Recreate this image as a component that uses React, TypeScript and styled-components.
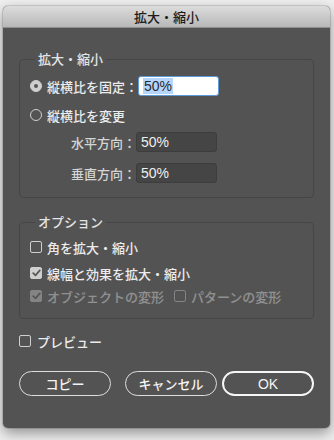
import styled, { createGlobalStyle } from "styled-components";

const GlobalStyle = createGlobalStyle`
  html, body {
    margin: 0;
    padding: 0;
    background: #efefef;
  }
  body {
    font-family: "Noto Sans CJK JP", "Noto Sans", sans-serif;
  }
`;

const Page = styled.div`
  width: 334px;
  height: 440px;
  padding: 6px 4px 0 3px;
  box-sizing: border-box;
  overflow: hidden;
`;

const Window = styled.div`
  width: 327px;
  height: 422px;
  border-radius: 5px;
  overflow: hidden;
  display: flex;
  flex-direction: column;
  background: #535353;
  box-shadow: 0 5px 14px rgba(0, 0, 0, 0.4), 0 0 0 1px rgba(0, 0, 0, 0.12);
`;

const TitleBar = styled.div`
  height: 22px;
  flex-shrink: 0;
  background: linear-gradient(#dcdcdc, #b8b8b8);
  border-bottom: 1px solid #8e8e8e;
  box-sizing: border-box;
  display: flex;
  align-items: center;
  justify-content: center;
  font-size: 13px;
  font-weight: 500;
  color: #1c1c1c;
`;

const Body = styled.div`
  flex: 1;
  padding: 23px 16px 0 16px;
  display: flex;
  flex-direction: column;
  color: #e6e6e6;
  font-size: 13px;
  font-weight: 500;
`;

const Group = styled.fieldset<{ $top?: number }>`
  margin: ${(p) => p.$top ?? 0}px 0 0 0;
  padding: ${(p) => (p.$top ? "8px 10px 13px" : "9px 10px 14px")};
  border: 1px solid #464646;
  border-radius: 4px;
  min-width: 0;
`;

const Legend = styled.legend`
  margin-left: 5px;
  padding: 0 3px;
  font-size: 13px;
  line-height: 16px;
  color: #e4e4e4;
`;

const Row = styled.div<{ $gap?: number }>`
  display: flex;
  align-items: center;
  height: 20px;
  margin-top: ${(p) => p.$gap ?? 0}px;
`;

const OptionLabel = styled.div`
  flex: 0 0 106px;
  display: flex;
  align-items: center;
  gap: 5px;
  white-space: nowrap;
  color: #ececec;
`;

const FieldLabel = styled.div`
  flex: 0 0 106px;
  text-align: right;
  white-space: nowrap;
  color: #d4d4d4;
`;

const Radio = styled.span<{ $on?: boolean }>`
  width: 12px;
  height: 12px;
  box-sizing: border-box;
  border-radius: 50%;
  border: 1px solid #cfcfcf;
  background: ${(p) => (p.$on ? "#cfcfcf" : "transparent")};
  display: flex;
  align-items: center;
  justify-content: center;
  flex-shrink: 0;
  &::after {
    content: "";
    display: ${(p) => (p.$on ? "block" : "none")};
    width: 4px;
    height: 4px;
    border-radius: 50%;
    background: #555;
  }
`;

const TextBox = styled.div<{ $active?: boolean }>`
  width: 81px;
  height: 20px;
  box-sizing: border-box;
  border-radius: 3px;
  display: flex;
  align-items: center;
  padding-left: 4px;
  font-family: "Liberation Sans", Arial, sans-serif;
  font-weight: 400;
  font-size: 14px;
  background: ${(p) => (p.$active ? "#ffffff" : "#454545")};
  border: 1px solid ${(p) => (p.$active ? "#5e9ad6" : "#3d3d3d")};
  color: ${(p) => (p.$active ? "#2a2a2a" : "#efefef")};
`;

const Selected = styled.span`
  background: #b4d5fd;
  padding: 0 1px;
`;

const CheckRow = styled.div<{ $gap?: number; $disabled?: boolean }>`
  display: flex;
  align-items: center;
  height: 18px;
  margin-top: ${(p) => p.$gap ?? 0}px;
  opacity: ${(p) => (p.$disabled ? 0.4 : 1)};
`;

const CheckItem = styled.label<{ $space?: number }>`
  display: flex;
  align-items: center;
  gap: ${(p) => p.$space ?? 5}px;
  white-space: nowrap;
  color: #ececec;
  & + & {
    margin-left: 10px;
  }
`;

const Box = styled.span<{ $on?: boolean }>`
  width: 12px;
  height: 12px;
  box-sizing: border-box;
  border-radius: 2px;
  border: 1px solid #cfcfcf;
  background: ${(p) => (p.$on ? "#cfcfcf" : "transparent")};
  display: flex;
  align-items: center;
  justify-content: center;
  flex-shrink: 0;
`;

const PreviewRow = styled.div`
  display: flex;
  height: 18px;
  align-items: center;
  margin-top: 13px;
`;

const ButtonRow = styled.div`
  display: flex;
  align-items: center;
  margin-top: 21px;
  gap: 5px;
`;

const Button = styled.button<{ $primary?: boolean }>`
  width: 92px;
  height: 25px;
  box-sizing: border-box;
  border-radius: 13px;
  border: ${(p) => (p.$primary ? "2px solid #f6f6f6" : "1px solid #dedede")};
  background: transparent;
  color: #f4f4f4;
  font-family: ${(p) =>
    p.$primary
      ? '"Liberation Sans", Arial, sans-serif'
      : '"Noto Sans CJK JP", sans-serif'};
  font-size: ${(p) => (p.$primary ? 14 : 13)}px;
  font-weight: 500;
  padding: 0;
  &:first-child {
    margin-right: auto;
  }
`;

function Check({ on }: { on?: boolean }) {
  return (
    <Box $on={on}>
      {on && (
        <svg width="9" height="8" viewBox="0 0 9 8">
          <path
            d="M1.2 4.2 L3.5 6.4 L7.8 1.4"
            fill="none"
            stroke="#585858"
            strokeWidth="1.7"
            strokeLinecap="round"
            strokeLinejoin="round"
          />
        </svg>
      )}
    </Box>
  );
}

function App() {
  return (
    <Page>
      <GlobalStyle />
      <Window>
        <TitleBar>拡大・縮小</TitleBar>
        <Body>
          <Group>
            <Legend>拡大・縮小</Legend>
            <Row>
              <OptionLabel>
                <Radio $on />
                縦横比を固定：
              </OptionLabel>
              <TextBox $active>
                <Selected>50%</Selected>
              </TextBox>
            </Row>
            <Row $gap={9}>
              <OptionLabel>
                <Radio />
                縦横比を変更
              </OptionLabel>
            </Row>
            <Row $gap={7}>
              <FieldLabel>水平方向：</FieldLabel>
              <TextBox>50%</TextBox>
            </Row>
            <Row $gap={11}>
              <FieldLabel>垂直方向：</FieldLabel>
              <TextBox>50%</TextBox>
            </Row>
          </Group>

          <Group $top={16}>
            <Legend>オプション</Legend>
            <CheckRow>
              <CheckItem>
                <Check />
                角を拡大・縮小
              </CheckItem>
            </CheckRow>
            <CheckRow $gap={8}>
              <CheckItem>
                <Check on />
                線幅と効果を拡大・縮小
              </CheckItem>
            </CheckRow>
            <CheckRow $gap={5} $disabled>
              <CheckItem>
                <Check on />
                オブジェクトの変形
              </CheckItem>
              <CheckItem>
                <Check />
                パターンの変形
              </CheckItem>
            </CheckRow>
          </Group>

          <PreviewRow>
            <CheckItem $space={6}>
              <Check />
              プレビュー
            </CheckItem>
          </PreviewRow>

          <ButtonRow>
            <Button>コピー</Button>
            <Button>キャンセル</Button>
            <Button $primary>OK</Button>
          </ButtonRow>
        </Body>
      </Window>
    </Page>
  );
}

export default App;
